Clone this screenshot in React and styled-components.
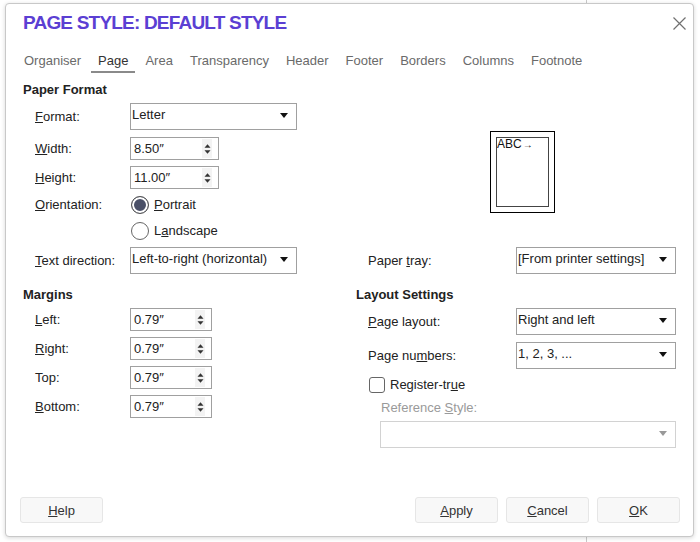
import React from 'react';
import styled, { createGlobalStyle } from 'styled-components';

const GlobalStyle = createGlobalStyle`
  html, body { margin: 0; }
  * { box-sizing: border-box; }
  body {
    width: 700px;
    height: 542px;
    overflow: hidden;
    padding: 3px 0 0 5px;
    background: #fff linear-gradient(to right, transparent 586px, #c9c9c9 586px, #c9c9c9 587px, transparent 587px);
    font-family: "Liberation Sans", Arial, sans-serif;
    font-size: 13px;
    color: #222;
  }
`;

const Dialog = styled.div`
  width: 689px;
  height: 534px;
  background: #fff;
  border: 1px solid #c8c8c8;
  border-radius: 4px;
  box-shadow: 0 1px 4px rgba(0, 0, 0, 0.16);
  display: flex;
  flex-direction: column;
`;

const Header = styled.div`
  height: 49px;
  padding: 9px 7px 0 17px;
  display: flex;
  justify-content: space-between;
  align-items: flex-start;
`;

const Title = styled.h1`
  margin: 0;
  font-size: 19px;
  line-height: 19px;
  font-weight: 700;
  letter-spacing: -0.8px;
  color: #5b3fd3;
`;

const CloseButton = styled.button`
  border: 0;
  background: none;
  padding: 0;
  margin-top: 4px;
  width: 13px;
  height: 13px;
  display: flex;
`;

const Tabs = styled.div`
  display: flex;
  gap: 3px;
  padding-left: 11px;
`;

const Tab = styled.div`
  padding: 0 7px 2px;
  line-height: 16px;
  color: ${p => (p.$active ? '#333' : '#6a6a6a')};
  border-bottom: 2px solid ${p => (p.$active ? '#8a8a8a' : 'transparent')};
`;

const Main = styled.div`
  display: grid;
  grid-template-columns: 333px 320px;
  align-items: start;
  padding: 9px 17px 0;
`;

const Cell = styled.div`
  margin-top: ${p => p.$mt || 0}px;
  display: flex;
  flex-direction: column;
`;

const SectionTitle = styled.div`
  font-weight: 700;
  line-height: 16px;
  margin-bottom: 5px;
`;

const FieldRow = styled.div`
  display: grid;
  grid-template-columns: ${p => p.$label}px auto;
  align-items: center;
  padding-left: 12px;
  margin-top: ${p => p.$mt || 0}px;
  height: ${p => (p.$h ? `${p.$h}px` : 'auto')};
`;

const Label = styled.span`
  line-height: 16px;
  color: ${p => (p.$disabled ? '#9a9a9a' : '#222')};
`;

const Mn = styled.span`
  text-decoration: underline;
`;

const Combo = styled.div`
  width: ${p => p.$w}px;
  height: 27px;
  border: 1px solid ${p => (p.$disabled ? '#d2d2d2' : '#a0a0a0')};
  background: #fff;
  display: flex;
  align-items: flex-start;
  justify-content: space-between;
  padding: 3px 0 0 1px;
  line-height: 16px;
  margin-left: ${p => p.$ml || 0}px;
  margin-top: ${p => p.$mt || 0}px;
`;

const ComboArrow = styled.svg`
  margin-top: 6px;
  margin-right: 8px;
  flex: none;
`;

const Spin = styled.div`
  width: ${p => p.$w}px;
  height: 23px;
  border: 1px solid #a0a0a0;
  background: #fff;
  display: flex;
  align-items: center;
  padding-left: 3px;
  line-height: 16px;
`;

const SpinButtons = styled.div`
  margin-left: auto;
  margin-right: 6px;
  width: 10px;
  height: 19px;
  background: #f3f3f3;
  display: flex;
  align-items: center;
  justify-content: center;
`;

const RadioOption = styled.label`
  display: flex;
  align-items: center;
  gap: 5px;
  margin-left: 1px;
  line-height: 16px;
`;

const RadioCircle = styled.span`
  width: 18px;
  height: 18px;
  border-radius: 50%;
  border: ${p => (p.$checked ? '1.5px solid #555' : '1px solid #666')};
  background: ${p => (p.$checked ? '#4a5068' : '#fff')};
  box-shadow: ${p => (p.$checked ? 'inset 0 0 0 2px #fff' : 'none')};
  flex: none;
`;

const PreviewCell = styled.div`
  padding: 49px 0 0 134px;
`;

const PageOuter = styled.div`
  width: 65px;
  height: 82px;
  border: 1px solid #000;
  padding: 5px;
`;

const PageInner = styled.div`
  width: 100%;
  height: 100%;
  border: 1px solid #444;
  font-size: 12px;
  line-height: 12px;
  color: #111;
  display: flex;
  align-items: flex-start;
`;

const SmallArrow = styled.span`
  font-size: 10px;
  line-height: 12px;
  margin-top: 1px;
  margin-left: 1px;
`;

const CheckRow = styled.label`
  display: flex;
  align-items: center;
  gap: 5px;
  height: 20px;
  padding-left: 13px;
  margin-top: 6px;
  line-height: 16px;
`;

const CheckBox = styled.span`
  width: 16px;
  height: 16px;
  border: 1px solid #666;
  border-radius: 3px;
  background: #fff;
  flex: none;
`;

const SubLabel = styled.div`
  padding-left: 25px;
  margin-top: 5px;
  line-height: 16px;
  color: #9a9a9a;
`;

const Footer = styled.div`
  margin-top: auto;
  display: flex;
  gap: 8px;
  padding: 0 13px 13px 14px;
`;

const Button = styled.button`
  width: 83px;
  height: 26px;
  border: 1px solid #e6e6e6;
  border-radius: 3px;
  background: #f8f8f8;
  font-family: "Liberation Sans", Arial, sans-serif;
  font-size: 13px;
  color: #333;
  padding: 0;
  margin-right: ${p => (p.$push ? 'auto' : '0')};
`;

const DownArrow = ({ color = '#111' }) => (
  <ComboArrow width="8" height="5" viewBox="0 0 8 5">
    <polygon points="0,0 8,0 4,5" fill={color} />
  </ComboArrow>
);

const ComboBox = ({ w, children, disabled, ml, mt }) => (
  <Combo $w={w} $disabled={disabled} $ml={ml} $mt={mt}>
    <span>{children}</span>
    <DownArrow color={disabled ? '#999' : '#111'} />
  </Combo>
);

const SpinBox = ({ w, value }) => (
  <Spin $w={w}>
    <span>{value}</span>
    <SpinButtons>
      <svg width="7" height="12" viewBox="0 0 7 12">
        <polygon points="0.5,4.8 3.5,1.3 6.5,4.8" fill="#333" />
        <polygon points="0.5,7.2 3.5,10.7 6.5,7.2" fill="#333" />
      </svg>
    </SpinButtons>
  </Spin>
);

const tabs = ['Organiser', 'Page', 'Area', 'Transparency', 'Header', 'Footer', 'Borders', 'Columns', 'Footnote'];

export default function App() {
  return (
    <>
      <GlobalStyle />
      <Dialog>
        <Header>
          <Title>PAGE STYLE: DEFAULT STYLE</Title>
          <CloseButton aria-label="Close">
            <svg width="13" height="13" viewBox="0 0 13 13">
              <path d="M0.5 0.5 L12.5 12.5 M12.5 0.5 L0.5 12.5" stroke="#707070" strokeWidth="1.2" fill="none" />
            </svg>
          </CloseButton>
        </Header>

        <Tabs>
          {tabs.map(t => (
            <Tab key={t} $active={t === 'Page'}>{t}</Tab>
          ))}
        </Tabs>

        <Main>
          <Cell>
            <SectionTitle>Paper Format</SectionTitle>
            <FieldRow $label={95}>
              <Label><Mn>F</Mn>ormat:</Label>
              <ComboBox w={167}>Letter</ComboBox>
            </FieldRow>
            <FieldRow $label={95} $mt={7}>
              <Label><Mn>W</Mn>idth:</Label>
              <SpinBox w={89} value="8.50″" />
            </FieldRow>
            <FieldRow $label={95} $mt={6}>
              <Label><Mn>H</Mn>eight:</Label>
              <SpinBox w={89} value="11.00″" />
            </FieldRow>
            <FieldRow $label={95} $mt={5} $h={22}>
              <Label><Mn>O</Mn>rientation:</Label>
              <RadioOption>
                <RadioCircle $checked />
                <span><Mn>P</Mn>ortrait</span>
              </RadioOption>
            </FieldRow>
            <FieldRow $label={95} $mt={4} $h={22}>
              <span />
              <RadioOption>
                <RadioCircle />
                <span>L<Mn>a</Mn>ndscape</span>
              </RadioOption>
            </FieldRow>
          </Cell>
          <PreviewCell>
            <PageOuter>
              <PageInner>
                <span>ABC</span>
                <SmallArrow>→</SmallArrow>
              </PageInner>
            </PageOuter>
          </PreviewCell>

          <Cell $mt={5}>
            <FieldRow $label={95}>
              <Label><Mn>T</Mn>ext direction:</Label>
              <ComboBox w={167}>Left-to-right (horizontal)</ComboBox>
            </FieldRow>
          </Cell>
          <Cell $mt={5}>
            <FieldRow $label={148}>
              <Label>Paper <Mn>t</Mn>ray:</Label>
              <ComboBox w={160}>[From printer settings]</ComboBox>
            </FieldRow>
          </Cell>

          <Cell $mt={13}>
            <SectionTitle>Margins</SectionTitle>
            <FieldRow $label={95}>
              <Label><Mn>L</Mn>eft:</Label>
              <SpinBox w={82} value="0.79″" />
            </FieldRow>
            <FieldRow $label={95} $mt={6}>
              <Label><Mn>R</Mn>ight:</Label>
              <SpinBox w={82} value="0.79″" />
            </FieldRow>
            <FieldRow $label={95} $mt={6}>
              <Label>Top:</Label>
              <SpinBox w={82} value="0.79″" />
            </FieldRow>
            <FieldRow $label={95} $mt={6}>
              <Label><Mn>B</Mn>ottom:</Label>
              <SpinBox w={82} value="0.79″" />
            </FieldRow>
          </Cell>
          <Cell $mt={13}>
            <SectionTitle>Layout Settings</SectionTitle>
            <FieldRow $label={148}>
              <Label><Mn>P</Mn>age layout:</Label>
              <ComboBox w={160}>Right and left</ComboBox>
            </FieldRow>
            <FieldRow $label={148} $mt={7}>
              <Label>Page nu<Mn>m</Mn>bers:</Label>
              <ComboBox w={160}>1, 2, 3, ...</ComboBox>
            </FieldRow>
            <CheckRow>
              <CheckBox />
              <span>Register-tr<Mn>u</Mn>e</span>
            </CheckRow>
            <SubLabel>Reference <Mn>S</Mn>tyle:</SubLabel>
            <ComboBox w={296} ml={24} mt={5} disabled />
          </Cell>
        </Main>

        <Footer>
          <Button $push><Mn>H</Mn>elp</Button>
          <Button><Mn>A</Mn>pply</Button>
          <Button><Mn>C</Mn>ancel</Button>
          <Button><Mn>O</Mn>K</Button>
        </Footer>
      </Dialog>
    </>
  );
}
